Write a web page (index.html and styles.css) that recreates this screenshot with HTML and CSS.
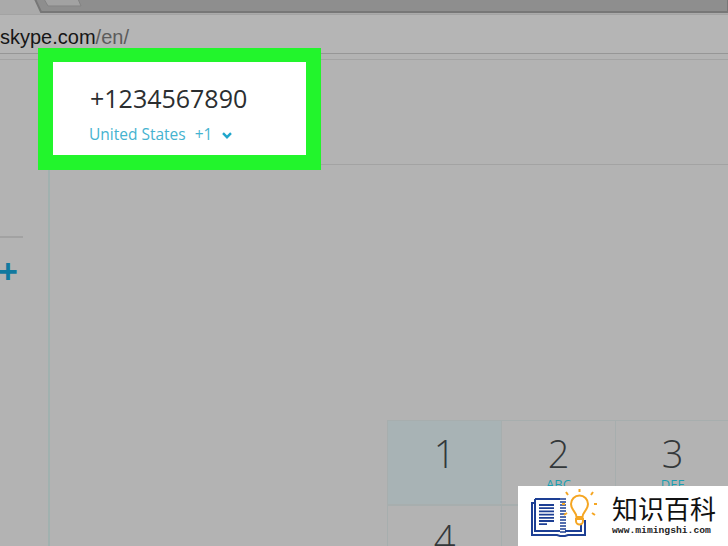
FILE: index.html
```html
<!DOCTYPE html>
<html>
  <head>
    <title>Skype dial pad</title>
    <link rel="stylesheet" href="styles.css">
  </head>
  <body>
    <div class="page">
      <div class="tabstrip">
        <svg class="tabs" width="728" height="14" viewBox="0 0 728 14">
          <path d="M35 -1 L41 12 H728 V-1 Z" fill="#8e8e8e" stroke="#777" stroke-width="2"/>
          <path d="M44 -1 L48 6 H81 L78 -1 Z" fill="#a2a2a2" stroke="#838383" stroke-width="1"/>
        </svg>
      </div>
      <div class="urlbar">
        <span class="host">skype.com</span><span class="path">/en/</span>
      </div>
      <div class="main">
        <div class="sidebar">
          <div class="side-line"></div>
          <div class="plus">+</div>
        </div>
        <div class="content">
          <div class="content-head"></div>
          <div class="keypad">
            <div class="key active"><span class="num">1</span></div>
            <div class="key"><span class="num">2</span><span class="sub">ABC</span></div>
            <div class="key"><span class="num">3</span><span class="sub">DEF</span></div>
            <div class="key"><span class="num">4</span></div>
            <div class="key"></div>
            <div class="key"></div>
          </div>
        </div>
      </div>

      <!-- highlight box over the page -->
      <div class="highlight">
        <div class="phone">+1234567890</div>
        <div class="country">
          United States <span class="code">+1</span>
          <svg class="chevron" width="10" height="7" viewBox="0 0 10 7">
            <path d="M1 1.2 L5 5.2 L9 1.2" fill="none" stroke="#1fa6cc" stroke-width="2.4"/>
          </svg>
        </div>
      </div>

      <!-- watermark -->
      <div class="mark">
        <svg class="mark-icon" width="66" height="50" viewBox="0 0 66 50">
          <g fill="none" stroke="#1d3f94">
            <path d="M4 13 H1 V45 H26 L29 46 H34 L37 45 H54 V30" stroke-width="2"/>
            <path d="M4 9 H29 M4 9 V41 H29" stroke-width="2"/>
            <path d="M8 15 H23 M8 18.2 H23 M8 21.4 H23 M8 24.6 H23 M8 27.8 H23 M8 31 H23 M8 34.2 H16" stroke-width="1.8"/>
            <path d="M29 9 H35 M29 12 H35 M29 15 H35 M29 18 H35 M29 21 H35 M29 24 H35 M29 27 H35 M29 30 H35 M29 33 H35 M29 36 H35 M29 39 H35 M29 42 H35" stroke-width="1.3"/>
            <path d="M34 41 H50 V34" stroke-width="2"/>
          </g>
          <g fill="none" stroke="#f5a623" stroke-width="2">
            <path d="M45.5 27 C45.5 22 40 20 40 14 A8.5 8.5 0 0 1 57 14 C57 20 51.5 22 51.5 27 Z"/>
            <path d="M45 29 H52 V31 A3.5 3.5 0 0 1 45 31 Z"/>
            <path d="M48.5 2 V-1 M37 5 L35 2 M60 5 L62 2 M34 14 H31 M63 14 H66 M36 23 L33 25 M61 23 L64 25"/>
          </g>
        </svg>
        <div class="mark-text">
          <div class="mark-title">知识百科</div>
          <div class="mark-url">www.mimingshi.com</div>
        </div>
      </div>
    </div>
  </body>
</html>
```

FILE: styles.css
```css
html,
body {
  margin: 0;
  padding: 0;
}
.page {
  position: relative;
  width: 728px;
  height: 546px;
  overflow: hidden;
  background-color: #b3b3b3;
  font-family: "Open Sans", "Liberation Sans", sans-serif;
}

.tabstrip {
  height: 14px;
  background-color: #aaa;
  overflow: hidden;
}
.tabs {
  display: block;
}

.urlbar {
  height: 40px;
  box-sizing: border-box;
  padding-top: 10px;
  border-top: 1px solid #a3a3a3;
  border-bottom: 1px solid #969696;
  background-color: #b5b5b5;
  font-family: "Liberation Sans", sans-serif;
  font-size: 20px;
  line-height: 24px;
  white-space: nowrap;
}
.host {
  color: #161616;
}
.path {
  color: #5c5c5c;
}

.main {
  display: flex;
  height: 486px;
  border-top: 1px solid #a3a3a3;
  margin-top: 5px;
}
.sidebar {
  width: 50px;
  flex: none;
  box-sizing: border-box;
  border-right: 2px solid #a1b1af;
  padding-top: 176px;
}
.side-line {
  width: 23px;
  height: 2px;
  background-color: #a2a2a2;
}
.plus {
  margin-top: 15px;
  margin-left: -2px;
  color: #11799f;
  font-family: "Liberation Sans", sans-serif;
  font-size: 34px;
  font-weight: bold;
  line-height: 36px;
}

.content {
  flex: 1;
  min-width: 0;
}
.content-head {
  height: 104px;
  border-bottom: 1px solid #a3a3a3;
}
.keypad {
  display: grid;
  grid-template-columns: repeat(3, 114px);
  grid-auto-rows: 85px;
  margin-top: 255px;
  margin-left: 337px;
  border-top: 1px solid #a7aeae;
  border-left: 1px solid #a7aeae;
}
.key {
  box-sizing: border-box;
  border-right: 1px solid #a7aeae;
  border-bottom: 2px solid #a7aeae;
  display: flex;
  flex-direction: column;
  align-items: center;
  overflow: hidden;
  color: #33383a;
}
.key.active {
  background-color: #a8b3b5;
}
.num {
  margin-top: 9px;
  font-size: 38px;
  font-weight: 300;
  line-height: 46px;
}
.sub {
  color: #1b9eb0;
  font-size: 13px;
  line-height: 16px;
}

.highlight {
  position: absolute;
  left: 38px;
  top: 48px;
  width: 253px;
  height: 93px;
  border: 15px solid #22f52c;
  border-top-width: 14px;
  background-color: #fff;
}
.phone {
  margin: 19px 0 0 37px;
  color: #2b2e30;
  font-size: 25px;
  line-height: 34px;
}
.country {
  margin: 8px 0 0 36px;
  color: #45b3d0;
  font-size: 15.5px;
  line-height: 22px;
  white-space: nowrap;
}
.code {
  margin-left: 5px;
}
.chevron {
  margin-left: 5px;
  vertical-align: 1px;
}

.mark {
  position: absolute;
  right: 0;
  bottom: 0;
  width: 210px;
  height: 60px;
  display: flex;
  background-color: #fff;
}
.mark-icon {
  margin: 4px 0 0 13px;
  flex: none;
  overflow: visible;
}
.mark-text {
  margin-left: 15px;
}
.mark-title {
  margin-top: 5px;
  color: #111;
  font-family: "Noto Sans CJK SC", sans-serif;
  font-size: 26px;
  line-height: 34px;
  white-space: nowrap;
}
.mark-url {
  color: #222;
  font-family: "Liberation Mono", monospace;
  font-size: 9.7px;
  font-weight: bold;
  line-height: 12px;
  white-space: nowrap;
}
```
